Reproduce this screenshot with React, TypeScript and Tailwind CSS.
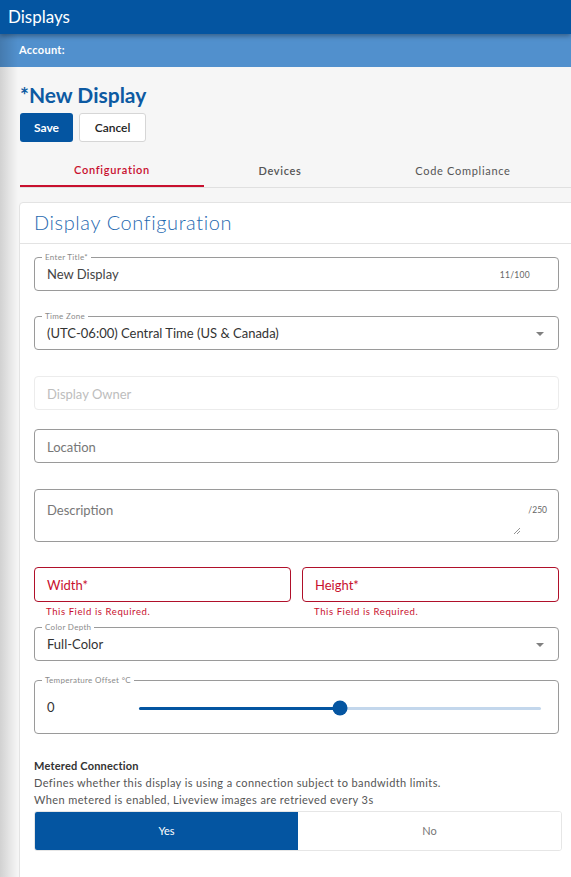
import type { ReactNode } from "react";

function Outlined({ label, children, className = "" }: { label?: string; children: ReactNode; className?: string }) {
    return (
        <div className={`relative rounded-[4px] border border-[#9a9a9a] bg-white ${className}`}>
            {label && (
                <span className="absolute -top-[5px] left-[7px] bg-white px-[3px] text-[8px] leading-[9px] tracking-[0.3px] text-[#8a8a8a]">
                    {label}
                </span>
            )}
            {children}
        </div>
    );
}

function Caret() {
    return (
        <svg width="8" height="4" viewBox="0 0 8 4" className="absolute right-[14px] top-[15px]">
            <path d="M0 0h8L4 4z" fill="#808080" />
        </svg>
    );
}

export default function App() {
    return (
        <div className="relative h-[877px] w-[571px] overflow-hidden bg-[#f6f6f6] font-['Lato',sans-serif]">
            <div className="relative z-10 flex h-[34px] items-center bg-[#0455a1] pl-[8px] text-[17px] text-white shadow-[0_2px_5px_rgba(0,0,0,0.35)]">
                Displays
            </div>
            <div className="flex h-[33px] items-center bg-[#5190cd] pl-[19px] text-[11px] font-bold tracking-[0.3px] text-white">
                Account:
            </div>
            {/* drawer shadow on the left edge */}
            <div className="pointer-events-none absolute bottom-0 left-0 top-[34px] z-20 w-[18px] bg-gradient-to-r from-black/15 to-transparent" />

            <div className="pl-[20px]">
                <h1 className="mt-[15px] text-[21px] font-bold leading-[25px] text-[#0d5aa2]">*New Display</h1>
                <div className="mt-[6px] flex gap-[6px]">
                    <button className="h-[29px] w-[53px] rounded-[3px] bg-[#0455a1] text-[12px] font-bold text-white">Save</button>
                    <button className="h-[29px] w-[67px] rounded-[3px] border border-[#d6d6d6] bg-white text-[12px] font-semibold text-[#222]">Cancel</button>
                </div>

                <div className="mt-[13px] flex border-b border-[#e0e0e0] text-[11px] font-semibold tracking-[0.7px]">
                    <div className="-mb-px flex h-[32px] w-[184px] items-center justify-center border-b-2 border-[#c8102e] text-[#c8102e]">Configuration</div>
                    <div className="flex h-[32px] w-[152px] items-center justify-center text-[#555]">Devices</div>
                    <div className="flex h-[32px] w-[214px] items-center justify-center font-normal text-[#555]">Code Compliance</div>
                </div>

                <div className="-ml-px mt-[14px] w-[570px] rounded-[4px] border border-[#e3e3e3] bg-white">
                    <div className="flex h-[41px] items-center border-b border-[#e3e3e3] pl-[14px] pb-[2px] text-[20px] font-light tracking-[0.6px] text-[#1f69b0]">
                        Display Configuration
                    </div>
                    <div className="w-[539px] pl-[14px] pb-[40px]">
                        <Outlined label="Enter Title*" className="mt-[13px] h-[34px]">
                            <div className="flex h-full items-center justify-between pl-[12px] pr-[28px] pt-[2px]">
                                <span className="text-[13px] text-[#444]">New Display</span>
                                <span className="text-[8.5px] tracking-[0.3px] text-[#666]">11/100</span>
                            </div>
                        </Outlined>

                        <Outlined label="Time Zone" className="mt-[25px] h-[34px]">
                            <div className="flex h-full items-center pl-[12px] pt-[1px] text-[13px] text-[#333]">
                                (UTC-06:00) Central Time (US &amp; Canada)
                            </div>
                            <Caret />
                        </Outlined>

                        <div className="mt-[26px] flex h-[34px] items-center rounded-[4px] border border-[#ececec] pl-[12px] pt-[3px] text-[13px] text-[#bdbdbd]">
                            Display Owner
                        </div>

                        <Outlined className="mt-[19px] h-[34px]">
                            <div className="flex h-full items-center pl-[12px] pt-[3px] text-[13px] text-[#777]">Location</div>
                        </Outlined>

                        <Outlined className="mt-[26px] h-[53px]">
                            <div className="flex items-start justify-between pl-[12px] pr-[11px] pt-[11px]">
                                <span className="text-[13px] text-[#777]">Description</span>
                                <span className="mt-[3px] text-[8.5px] text-[#666]">/250</span>
                            </div>
                            <svg width="8" height="8" viewBox="0 0 8 8" className="absolute bottom-[6px] right-[37px]">
                                <path d="M1 7L7 1M4 7L7 4" stroke="#888" strokeWidth="0.9" />
                            </svg>
                        </Outlined>

                        <div className="mt-[25px] grid grid-cols-2 gap-[11px]">
                            <div>
                                <div className="flex h-[35px] items-center rounded-[4px] border border-[#b0102a] pl-[12px] pt-[3px] text-[13px] text-[#c8102e]">Width*</div>
                                <div className="mt-[5px] pl-[12px] text-[9.5px] leading-[10px] tracking-[0.6px] text-[#c8102e]">This Field is Required.</div>
                            </div>
                            <div>
                                <div className="flex h-[35px] items-center rounded-[4px] border border-[#b0102a] pl-[12px] pt-[3px] text-[13px] text-[#c8102e]">Height*</div>
                                <div className="mt-[5px] pl-[12px] text-[9.5px] leading-[10px] tracking-[0.6px] text-[#c8102e]">This Field is Required.</div>
                            </div>
                        </div>

                        <Outlined label="Color Depth" className="mt-[10px] h-[34px]">
                            <div className="flex h-full items-center pl-[12px] pt-[2px] text-[13px] text-[#333]">Full-Color</div>
                            <Caret />
                        </Outlined>

                        <Outlined label="Temperature Offset °C" className="mt-[19px] h-[54px]">
                            <div className="flex h-full items-center pl-[12px] pr-[17px] pt-[2px]">
                                <span className="w-[92px] text-[13px] text-[#333]">0</span>
                                <div className="relative h-[3px] flex-1 rounded-full bg-[#c3d7ec]">
                                    <div className="h-full w-1/2 rounded-full bg-[#0455a1]" />
                                    <div className="absolute left-1/2 top-1/2 h-[15px] w-[15px] -translate-x-1/2 -translate-y-1/2 rounded-full bg-[#0455a1]" />
                                </div>
                            </div>
                        </Outlined>

                        <div className="mt-[24px] text-[11px] font-bold leading-[15px] tracking-[0.2px] text-[#333]">Metered Connection</div>
                        <div className="mt-[1px] text-[11px] leading-[17px] tracking-[0.4px] text-[#555]">
                            Defines whether this display is using a connection subject to bandwidth limits.
                            <br />
                            When metered is enabled, Liveview images are retrieved every 3s
                        </div>
                        <div className="mt-[3px] flex h-[40px] w-[528px] overflow-hidden rounded-[3px] border border-[#e6e6e6] text-[11px]">
                            <div className="flex w-[263px] items-center justify-center bg-[#0455a1] text-white">Yes</div>
                            <div className="flex flex-1 items-center justify-center bg-white text-[#777]">No</div>
                        </div>
                    </div>
                </div>
            </div>
        </div>
    );
}
